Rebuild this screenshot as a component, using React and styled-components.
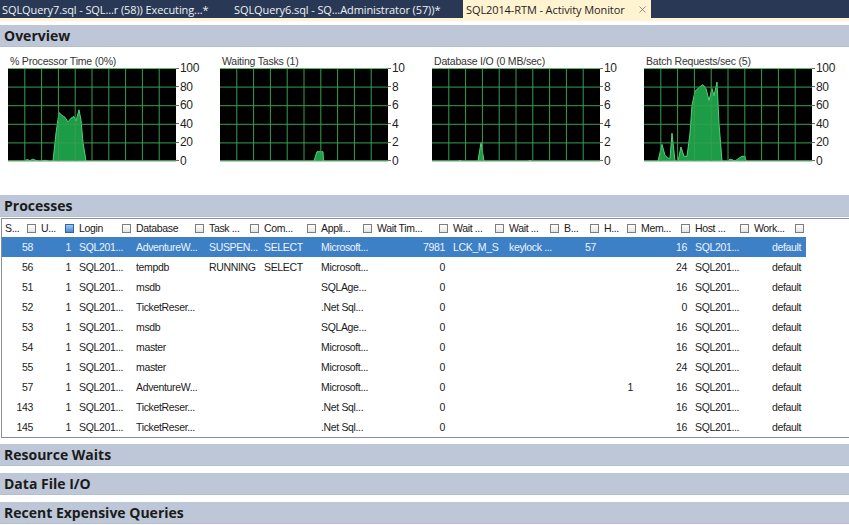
import React from "react";
import styled, { createGlobalStyle } from "styled-components";
import { X } from "lucide-react";

const GlobalStyle = createGlobalStyle`
  html, body {
    margin: 0;
    padding: 0;
    background: #ffffff;
    overflow: hidden;
  }
  body {
    width: 849px;
    height: 525px;
    font-family: "Liberation Sans", Arial, sans-serif;
  }
`;

const Page = styled.div`
  width: 849px;
  height: 525px;
  display: flex;
  flex-direction: column;
  background: #ffffff;
`;

/* 탭 바 */
const TabBar = styled.div`
  display: flex;
  height: 18px;
  background: #293955;
  flex-shrink: 0;
`;

const Tab = styled.div`
  display: flex;
  align-items: center;
  justify-content: space-between;
  width: ${(p) => p.$width}px;
  padding: 0 3px 0 ${(p) => (p.$active ? 3 : 2)}px;
  box-sizing: border-box;
  background: ${(p) => (p.$active ? "#fff3d1" : "transparent")};
  color: ${(p) => (p.$active ? "#1e1e1e" : "#eef1f6")};
  font-family: "Open Sans", sans-serif;
  font-size: 11px;
  letter-spacing: -0.1px;
  white-space: nowrap;
`;

const Close = styled.span`
  display: flex;
  color: #6b6b6b;
`;

const TabStrip = styled.div`
  height: 3px;
  background: #fdf4d6;
  margin-bottom: 4px;
  flex-shrink: 0;
`;

/* 섹션 헤더 */
const SectionBar = styled.div`
  height: 22px;
  flex-shrink: 0;
  margin-top: ${(p) => p.$gap || 0}px;
  display: flex;
  align-items: center;
  padding-left: 4px;
  background: #bdc7d8;
  border-bottom: 1px solid #b3bed0;
  box-sizing: border-box;
  font-family: "Open Sans", sans-serif;
  font-weight: 700;
  font-size: 14px;
  color: #1b1b1b;
`;

/* 차트 */
const ChartsRow = styled.div`
  height: 148px;
  flex-shrink: 0;
  display: grid;
  grid-template-columns: repeat(4, 212px);
  padding: 8px 0 0 8px;
  box-sizing: border-box;
`;

const ChartBox = styled.div`
  display: flex;
  flex-direction: column;
`;

const ChartTitle = styled.div`
  margin-left: 2px;
  font-size: 10.5px;
  letter-spacing: -0.2px;
  line-height: 13px;
  color: #333333;
  white-space: nowrap;
`;

const PlotRow = styled.div`
  display: flex;
  align-items: flex-start;
`;

const Axis = styled.div`
  height: 107px;
  margin-top: -7px;
  display: flex;
  flex-direction: column;
  justify-content: space-between;
`;

const AxisLabel = styled.div`
  display: flex;
  align-items: center;
  height: 14px;
  font-size: 12px;
  letter-spacing: -0.3px;
  color: #1f1f1f;

  &::before {
    content: "";
    width: 3px;
    height: 1px;
    margin-right: 1px;
    background: #6a6a6a;
  }
`;

const W = 168;
const H = 93;

const Chart = ({ title, ticks, points }) => {
  const pts = points
    .map(([x, v]) => `${x},${(H - (v / 100) * H).toFixed(1)}`)
    .join(" ");
  return (
    <ChartBox>
      <ChartTitle>{title}</ChartTitle>
      <PlotRow>
        <svg width={W} height={H + 2}>
          <rect x="0" y="0" width={W} height={H} fill="#000" />
          <polygon points={pts} fill="#1d9c47" stroke="#55d077" strokeWidth="1" />
          {Array.from({ length: 9 }, (_, i) => (
            <line
              key={"v" + i}
              x1={(i + 1) * 16.8}
              x2={(i + 1) * 16.8}
              y1="0"
              y2={H}
              stroke="#36a04e"
              strokeWidth="1"
            />
          ))}
          {Array.from({ length: 5 }, (_, i) => (
            <line
              key={"h" + i}
              x1="0"
              x2={W}
              y1={i * 18.6 + 0.5}
              y2={i * 18.6 + 0.5}
              stroke={i === 0 ? "#4fc06a" : "#36a04e"}
              strokeWidth="1"
            />
          ))}
          <line x1="0" x2={W} y1={H + 0.5} y2={H + 0.5} stroke="#c4c4c4" />
        </svg>
        <Axis>
          {ticks.map((t) => (
            <AxisLabel key={t}>{t}</AxisLabel>
          ))}
        </Axis>
      </PlotRow>
    </ChartBox>
  );
};

const charts = [
  {
    title: "% Processor Time (0%)",
    ticks: [100, 80, 60, 40, 20, 0],
    points: [
      [0, 0], [16, 0], [19, 1.5], [22, 0.5], [25, 2], [28, 0.5], [31, 0],
      [37, 0.8], [41, 0], [45, 0], [48, 30], [51, 52], [54, 49], [57, 47],
      [60, 42], [63, 46], [66, 48], [68, 43], [71, 55], [73, 44], [75, 20],
      [78, 0], [168, 0],
    ],
  },
  {
    title: "Waiting Tasks (1)",
    ticks: [10, 8, 6, 4, 2, 0],
    points: [[0, 0], [94, 0], [97, 10], [103, 10], [103.5, 0], [168, 0]],
  },
  {
    title: "Database I/O (0 MB/sec)",
    ticks: [10, 8, 6, 4, 2, 0],
    points: [
      [0, 0], [26, 0], [28, 0.8], [30, 0], [46, 0], [49, 20], [52, 0],
      [96, 0], [98, 0.8], [100, 0], [168, 0],
    ],
  },
  {
    title: "Batch Requests/sec (5)",
    ticks: [100, 80, 60, 40, 20, 0],
    points: [
      [0, 0], [14, 0], [18, 18], [21, 6], [24, 3], [26, 3], [28, 30], [31, 0],
      [34, 0], [37, 15], [40, 5], [43, 5], [46, 30], [48, 60], [51, 75],
      [56, 80], [59, 82], [62, 78], [65, 65], [68, 78], [70, 70], [73, 85],
      [75, 40], [78, 0], [84, 0], [86, 2], [89, 1], [91, 0], [95, 3], [98, 5],
      [101, 5], [102, 0], [168, 0],
    ],
  },
];

/* 프로세스 테이블 */
const COLS = "36px 38px 57px 73px 55px 57px 56px 76px 56px 55px 40px 37px 54px 59px 55px";
const RIGHT = [0, 1, 7, 10, 11, 12, 14];

const Table = styled.div`
  margin: 1px 0 0 1px;
  height: 220px;
  flex-shrink: 0;
  border-top: 1px solid #8a8f97;
  border-left: 1px solid #8a8f97;
  border-bottom: 1px solid #8a8f97;
  box-sizing: border-box;
  font-size: 10.5px;
  letter-spacing: -0.35px;
  color: #1c1c1c;
`;

const HeadRow = styled.div`
  display: grid;
  grid-template-columns: ${COLS};
  height: 18px;
  width: 804px;
`;

const HeadCell = styled.div`
  display: flex;
  align-items: center;
  justify-content: space-between;
  padding: 0 2px 0 3px;
  white-space: nowrap;
  overflow: hidden;
  color: #202020;
`;

const Filter = styled.span`
  width: 7px;
  height: 7px;
  flex-shrink: 0;
  border: 1px solid ${(p) => (p.$active ? "#2f64a8" : "#7d7d7d")};
  background: ${(p) =>
    p.$active
      ? "linear-gradient(#9cc6f0, #4b8ad4)"
      : "linear-gradient(#ffffff, #e4e4e4)"};
`;

const Row = styled.div`
  display: grid;
  grid-template-columns: ${COLS};
  height: 20px;
  width: 804px;
  background: ${(p) => (p.$selected ? "#3d80c6" : "transparent")};
  color: ${(p) => (p.$selected ? "#edf3fb" : "#1c1c1c")};
`;

const Cell = styled.div`
  line-height: 20px;
  padding: ${(p) => (p.$right ? "0 5px 0 0" : "0 0 0 3px")};
  text-align: ${(p) => (p.$right ? "right" : "left")};
  white-space: nowrap;
  overflow: hidden;
`;

const headers = [
  "S...", "U...", "Login", "Database", "Task ...", "Com...", "Appli...",
  "Wait Tim...", "Wait ...", "Wait ...", "B...", "H...", "Mem...", "Host ...", "Work...",
];

const row = (id, db, task, cmd, app, wt, extra = {}) => [
  id, "1", "SQL201...", db, task, cmd, app, wt,
  extra.wtype || "", extra.wres || "", extra.blk || "", extra.head || "",
  extra.mem || "16", "SQL201...", "default",
];

const rows = [
  row("58", "AdventureW...", "SUSPEN...", "SELECT", "Microsoft...", "7981", {
    wtype: "LCK_M_S", wres: "keylock ...", blk: "57",
  }),
  row("56", "tempdb", "RUNNING", "SELECT", "Microsoft...", "0", { mem: "24" }),
  row("51", "msdb", "", "", "SQLAge...", "0"),
  row("52", "TicketReser...", "", "", ".Net Sql...", "0", { mem: "0" }),
  row("53", "msdb", "", "", "SQLAge...", "0"),
  row("54", "master", "", "", "Microsoft...", "0"),
  row("55", "master", "", "", "Microsoft...", "0", { mem: "24" }),
  row("57", "AdventureW...", "", "", "Microsoft...", "0", { head: "1" }),
  row("143", "TicketReser...", "", "", ".Net Sql...", "0"),
  row("145", "TicketReser...", "", "", ".Net Sql...", "0"),
];

const App = () => {
  return (
    <Page>
      <GlobalStyle />
      <TabBar>
        <Tab $width={232}>SQLQuery7.sql - SQL...r (58)) Executing...*</Tab>
        <Tab $width={231}>SQLQuery6.sql - SQ...Administrator (57))*</Tab>
        <Tab $width={188} $active>
          SQL2014-RTM - Activity Monitor
          <Close>
            <X size={11} strokeWidth={1.6} />
          </Close>
        </Tab>
      </TabBar>
      <TabStrip />

      <SectionBar>Overview</SectionBar>
      <ChartsRow>
        {charts.map((c) => (
          <Chart key={c.title} {...c} />
        ))}
      </ChartsRow>

      <SectionBar>Processes</SectionBar>
      <Table>
        <HeadRow>
          {headers.map((h, i) => (
            <HeadCell key={i}>
              {h}
              <Filter $active={i === 1} />
            </HeadCell>
          ))}
        </HeadRow>
        {rows.map((r, ri) => (
          <Row key={ri} $selected={ri === 0}>
            {r.map((v, ci) => (
              <Cell key={ci} $right={RIGHT.includes(ci)}>
                {v}
              </Cell>
            ))}
          </Row>
        ))}
      </Table>

      <SectionBar $gap={6}>Resource Waits</SectionBar>
      <SectionBar $gap={7}>Data File I/O</SectionBar>
      <SectionBar $gap={7}>Recent Expensive Queries</SectionBar>
    </Page>
  );
};

export default App;
